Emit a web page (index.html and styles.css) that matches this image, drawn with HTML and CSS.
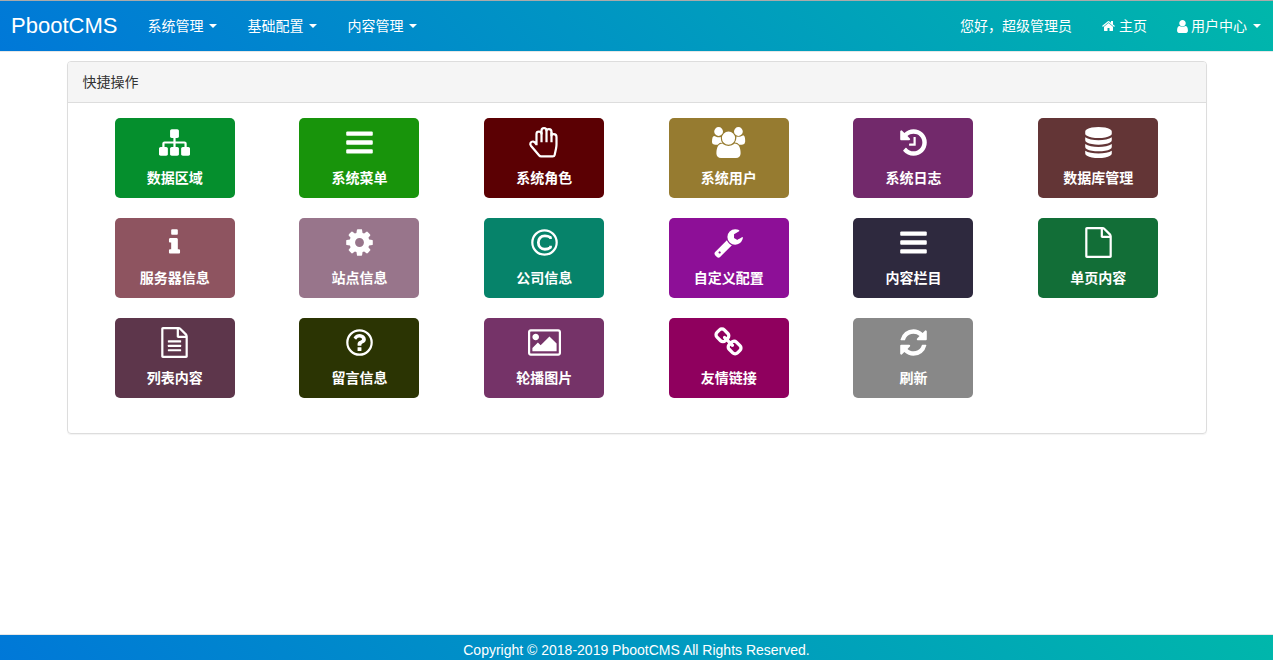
FILE: index.html
```html
<!DOCTYPE html>
<html lang="zh-CN">
<head>
<meta charset="utf-8">
<title>PbootCMS</title>
<link rel="stylesheet" href="styles.css">
</head>
<body>
<header class="navbar">
  <a class="brand" href="#">PbootCMS</a>
  <nav class="menu">
    <button class="nav-item" type="button">系统管理<span class="caret"></span></button>
    <button class="nav-item" type="button">基础配置<span class="caret"></span></button>
    <button class="nav-item" type="button">内容管理<span class="caret"></span></button>
  </nav>
  <div class="user-nav">
    <span class="nav-item">您好，超级管理员</span>
    <a class="nav-item" href="#"><svg class="home-icon" viewBox="90 0 1612 1792"><path d="M1472 992v480q0 26-19 45t-45 19h-384v-384h-256v384h-384q-26 0-45-19t-19-45v-480q0-1 .5-3t.5-3l575-474 575 474q1 2 1 6zm223-69l-62 74q-8 9-21 11h-3q-13 0-21-7l-692-577-692 577q-12 8-24 7-13-2-21-11l-62-74q-8-10-7-23.5t11-21.5l719-599q32-26 76-26t76 26l244 204v-195q0-14 9-23t23-9h192q14 0 23 9t9 23v408l219 182q10 8 11 21.5t-7 23.5z"/></svg>主页</a>
    <button class="nav-item" type="button"><svg class="user-icon" viewBox="256 128 1280 1536"><path d="M1536 1399q0 109-62.5 187t-150.5 78h-854q-88 0-150.5-78t-62.5-187q0-85 8.5-160.5t31.5-152 58.5-131 94-89 134.5-34.5q131 128 313 128t313-128q76 0 134.5 34.5t94 89 58.5 131 31.5 152 8.5 160.5zm-256-887q0 159-112.5 271.5t-271.5 112.5-271.5-112.5-112.5-271.5 112.5-271.5 271.5-112.5 271.5 112.5 112.5 271.5z"/></svg>用户中心<span class="caret"></span></button>
  </div>
</header>

<main class="container">
  <section class="panel">
    <h1 class="panel-heading">快捷操作</h1>
    <div class="tiles">
      <a class="tile area" href="#"><svg viewBox="0 0 1792 1792"><path d="M1792 1248v320q0 40-28 68t-68 28h-320q-40 0-68-28t-28-68v-320q0-40 28-68t68-28h96v-192h-512v192h96q40 0 68 28t28 68v320q0 40-28 68t-68 28h-320q-40 0-68-28t-28-68v-320q0-40 28-68t68-28h96v-192h-512v192h96q40 0 68 28t28 68v320q0 40-28 68t-68 28h-320q-40 0-68-28t-28-68v-320q0-40 28-68t68-28h96v-192q0-52 38-90t90-38h512v-192h-96q-40 0-68-28t-28-68v-320q0-40 28-68t68-28h320q40 0 68 28t28 68v320q0 40-28 68t-68 28h-96v192h512q52 0 90 38t38 90v192h96q40 0 68 28t28 68z"/></svg>数据区域</a>
      <a class="tile menus" href="#"><svg viewBox="0 0 1792 1792"><path d="M1664 1344v128q0 26-19 45t-45 19h-1408q-26 0-45-19t-19-45v-128q0-26 19-45t45-19h1408q26 0 45 19t19 45zm0-512v128q0 26-19 45t-45 19h-1408q-26 0-45-19t-19-45v-128q0-26 19-45t45-19h1408q26 0 45 19t19 45zm0-512v128q0 26-19 45t-45 19h-1408q-26 0-45-19t-19-45v-128q0-26 19-45t45-19h1408q26 0 45 19t19 45z"/></svg>系统菜单</a>
      <a class="tile roles" href="#"><svg viewBox="0 0 1792 1792"><g class="line"><path d="M433 1060V400q0-130 140-130 150 0 150 120V210q0-146 145-146 144 0 144 140 0-80 140-80 148 0 148 160v210q0-80 130-80 160 0 160 170v400q0 130-24 240l-84 390q-20 86-110 86H700q-70 0-110-50L110 1080q-60-80-24-160 50-90 160-80 60 6 100 60l87 120"/><path d="M723 300v580M1012 180v700M1300 300v580"/></g></svg>系统角色</a>
      <a class="tile users" href="#"><svg class="wide" viewBox="64 0 1920 1792"><path d="M657 896q-162 5-265 128h-134q-82 0-138-40.5t-56-118.5q0-353 124-353 6 0 43.5 21t97.5 42.5 119 21.5q67 0 133-23-5 37-5 66 0 159 93 287zm1071 637q0 120-73 189.5t-194 69.5h-874q-121 0-194-69.5t-73-189.5q0-53 3.5-103.5t14-109 26.5-108.5 43-97.5 62-81 85.5-53.5 111.5-20q10 0 43 21.5t73 48 107 48 135 21.5 135-21.5 107-48 73-48 43-21.5q61 0 111.5 20t85.5 53.5 62 81 43 97.5 26.5 108.5 14 109 3.5 103.5zm-1024-1277q0 106-75 181t-181 75-181-75-75-181 75-181 181-75 181 75 75 181zm704 384q0 159-112.5 271.5t-271.5 112.5-271.5-112.5-112.5-271.5 112.5-271.5 271.5-112.5 271.5 112.5 112.5 271.5zm576 225q0 78-56 118.5t-138 40.5h-134q-103-123-265-128 93-128 93-287 0-29-5-66 66 23 133 23 59 0 119-21.5t97.5-42.5 43.5-21q124 0 124 353zm-128-609q0 106-75 181t-181 75-181-75-75-181 75-181 181-75 181 75 75 181z"/></svg>系统用户</a>
      <a class="tile logs" href="#"><svg viewBox="0 0 1792 1792"><path d="M1664 896q0 156-61 298t-164 245-245 164-298 61q-172 0-327-72.5t-264-204.5q-7-10-6.5-22.5t8.5-20.5l137-138q10-9 25-9 16 2 23 12 73 95 179 147t225 52q104 0 198.5-40.5t163.5-109.5 109.5-163.5 40.5-198.5-40.5-198.5-109.5-163.5-163.5-109.5-198.5-40.5q-98 0-188 35.5t-160 101.5l137 138q31 30 14 69-17 40-59 40h-448q-26 0-45-19t-19-45v-448q0-42 40-59 39-17 69 14l130 129q107-101 244.5-156.5t284.5-55.5q156 0 298 61t245 164 164 245 61 298zm-640-288v448q0 14-9 23t-23 9h-320q-14 0-23-9t-9-23v-64q0-14 9-23t23-9h224v-352q0-14 9-23t23-9h64q14 0 23 9t9 23z"/></svg>系统日志</a>
      <a class="tile database" href="#"><svg viewBox="0 0 1792 1792"><path d="M896 768q237 0 443-43t325-127v170q0 69-103 128t-280 93.5-385 34.5-385-34.5-280-93.5-103-128v-170q119 84 325 127t443 43zm0 768q237 0 443-43t325-127v170q0 69-103 128t-280 93.5-385 34.5-385-34.5-280-93.5-103-128v-170q119 84 325 127t443 43zm0-384q237 0 443-43t325-127v170q0 69-103 128t-280 93.5-385 34.5-385-34.5-280-93.5-103-128v-170q119 84 325 127t443 43zm0-1152q208 0 385 34.5t280 93.5 103 128v128q0 69-103 128t-280 93.5-385 34.5-385-34.5-280-93.5-103-128v-128q0-69 103-128t280-93.5 385-34.5z"/></svg>数据库管理</a>
      <a class="tile server" href="#"><svg viewBox="0 0 1792 1792"><path d="M1216 1344v128q0 26-19 45t-45 19h-512q-26 0-45-19t-19-45v-128q0-26 19-45t45-19h64v-384h-64q-26 0-45-19t-19-45v-128q0-26 19-45t45-19h384q26 0 45 19t19 45v576h64q26 0 45 19t19 45zm-128-1152v192q0 26-19 45t-45 19h-256q-26 0-45-19t-19-45v-192q0-26 19-45t45-19h256q26 0 45 19t19 45z"/></svg>服务器信息</a>
      <a class="tile site" href="#"><svg viewBox="0 0 1792 1792"><path d="M1152 896q0-106-75-181t-181-75-181 75-75 181 75 181 181 75 181-75 75-181zm512-109v222q0 12-8 23t-20 13l-185 28q-19 54-39 91 35 50 107 138 10 12 10 25t-9 23q-27 37-99 108t-94 71q-12 0-26-9l-138-108q-44 23-91 38-16 136-29 186-7 28-36 28h-222q-14 0-24.5-8.5t-11.5-21.5l-28-184q-49-16-90-37l-141 107q-10 9-25 9-14 0-25-11-126-114-165-168-7-10-7-23 0-12 8-23 15-21 51-66.5t54-70.5q-27-50-41-99l-183-27q-13-2-21-12.5t-8-23.5v-222q0-12 8-23t19-13l186-28q14-46 39-92-40-57-107-138-10-12-10-24 0-10 9-23 26-36 98.5-107.5t94.5-71.5q13 0 26 10l138 107q44-23 91-38 16-136 29-186 7-28 36-28h222q14 0 24.5 8.5t11.5 21.5l28 184q49 16 90 37l142-107q9-9 24-9 13 0 25 10 129 119 165 170 7 8 7 22 0 12-8 23-15 21-51 66.5t-54 70.5q26 50 41 98l183 28q13 2 21 12.5t8 23.5z"/></svg>站点信息</a>
      <a class="tile company" href="#"><svg viewBox="0 0 1792 1792"><g class="line"><circle cx="896" cy="896" r="704"/><path class="thick" d="M1240 700V600Q1100 510 920 510 740 510 640 620 540 730 540 896q0 170 104 280t270 110q190 0 330-110v-90"/></g></svg>公司信息</a>
      <a class="tile custom" href="#"><svg viewBox="0 0 1792 1792"><path d="M448 1472q0-26-19-45t-45-19-45 19-19 45 19 45 45 19 45-19 19-45zm644-420l-682 682q-37 37-90 37-52 0-91-37l-106-108q-38-36-38-90 0-53 38-91l681-681q39 98 114.5 173.5t173.5 114.5zm634-435q0 39-23 106-47 134-164.5 217.5t-258.5 83.5q-185 0-316.5-131.5t-131.5-316.5 131.5-316.5 316.5-131.5q58 0 121.5 16.5t107.5 46.5q16 11 16 28t-16 28l-293 169v224l193 107q5-3 79-48.5t135.5-81 70.5-35.5q15 0 23.5 10t8.5 25z"/></svg>自定义配置</a>
      <a class="tile columns" href="#"><svg viewBox="0 0 1792 1792"><path d="M1664 1344v128q0 26-19 45t-45 19h-1408q-26 0-45-19t-19-45v-128q0-26 19-45t45-19h1408q26 0 45 19t19 45zm0-512v128q0 26-19 45t-45 19h-1408q-26 0-45-19t-19-45v-128q0-26 19-45t45-19h1408q26 0 45 19t19 45zm0-512v128q0 26-19 45t-45 19h-1408q-26 0-45-19t-19-45v-128q0-26 19-45t45-19h1408q26 0 45 19t19 45z"/></svg>内容栏目</a>
      <a class="tile single" href="#"><svg viewBox="0 0 1792 1792"><path d="M1596 380q28 28 48 76t20 88v1152q0 40-28 68t-68 28h-1344q-40 0-68-28t-28-68v-1600q0-40 28-68t68-28h896q40 0 88 20t76 48zm-444-244v376h376q-10-29-22-41l-313-313q-12-12-41-22zm384 1528v-1024h-416q-40 0-68-28t-28-68v-416h-768v1536h1280z"/></svg>单页内容</a>
      <a class="tile list" href="#"><svg viewBox="0 0 1792 1792"><path d="M1596 380q28 28 48 76t20 88v1152q0 40-28 68t-68 28h-1344q-40 0-68-28t-28-68v-1600q0-40 28-68t68-28h896q40 0 88 20t76 48zm-444-244v376h376q-10-29-22-41l-313-313q-12-12-41-22zm384 1528v-1024h-416q-40 0-68-28t-28-68v-416h-768v1536h1280z"/><rect x="512" y="768" width="768" height="128" rx="32"/><rect x="512" y="1024" width="768" height="128" rx="32"/><rect x="512" y="1280" width="768" height="128" rx="32"/></svg>列表内容</a>
      <a class="tile message" href="#"><svg viewBox="0 0 1792 1792"><circle class="line" cx="896" cy="896" r="704"/><path d="M1008 1200v160q0 14-9 23t-23 9h-160q-14 0-23-9t-9-23v-160q0-14 9-23t23-9h160q14 0 23 9t9 23zm256-496q0 50-15 90t-45.5 69-52 44-59.5 36q-32 18-46.5 28t-26 24-11.5 29v32q0 14-9 23t-23 9h-160q-14 0-23-9t-9-23v-68q0-35 10.5-64.5t24-47.5 39-35.5 41-25.5 44.5-21q53-25 75-43t22-49q0-42-43.5-71.5t-95.5-29.5q-56 0-95 27-29 20-80 83-9 12-25 12-11 0-19-6l-108-82q-10-7-12-20t5-23q122-192 349-192 129 0 238.5 89.5t109.5 214.5z"/></svg>留言信息</a>
      <a class="tile slides" href="#"><svg class="wide" viewBox="0 0 1920 1792"><path d="M640 576q0 80-56 136t-136 56-136-56-56-136 56-136 136-56 136 56 56 136zm1024 384v448h-1408v-192l320-320 160 160 512-512zm96-704h-1600q-13 0-22.5 9.5t-9.5 22.5v1216q0 13 9.5 22.5t22.5 9.5h1600q13 0 22.5-9.5t9.5-22.5v-1216q0-13-9.5-22.5t-22.5-9.5zm160 32v1216q0 66-47 113t-113 47h-1600q-66 0-113-47t-47-113v-1216q0-66 47-113t113-47h1600q66 0 113 47t47 113z"/></svg>轮播图片</a>
      <a class="tile links" href="#"><svg viewBox="0 0 1792 1792"><path d="M1520 1216q0-40-28-68l-208-208q-28-28-68-28-42 0-72 32 3 3 19 18.5t21.5 21.5 15 19 13 25.5 3.5 27.5q0 40-28 68t-68 28q-15 0-27.5-3.5t-25.5-13-19-15-21.5-21.5-18.5-19q-33 31-33 73 0 40 28 68l206 207q27 27 68 27 40 0 68-26l147-146q28-28 28-67zm-703-705q0-40-28-68l-206-207q-28-28-68-28-39 0-68 27l-147 146q-28 28-28 67 0 40 28 68l208 208q27 27 68 27 42 0 72-31-3-3-19-18.5t-21.5-21.5-15-19-13-25.5-3.5-27.5q0-40 28-68t68-28q15 0 27.5 3.5t25.5 13 19 15 21.5 21.5 18.5 19q33-31 33-73zm895 705q0 120-85 203l-147 146q-83 83-203 83-121 0-204-85l-206-207q-83-83-83-203 0-123 88-209l-88-88q-86 88-208 88-120 0-204-84l-208-208q-84-84-84-204t85-203l147-146q83-83 203-83 121 0 204 85l206 207q83 83 83 203 0 123-88 209l88 88q86-88 208-88 120 0 204 84l208 208q84 84 84 204z"/></svg>友情链接</a>
      <a class="tile refresh" href="#"><svg viewBox="0 0 1792 1792"><path d="M1639 1056q0 5-1 7-64 268-268 434.5t-478 166.5q-146 0-282.5-55t-243.5-157l-129 129q-19 19-45 19t-45-19-19-45v-448q0-26 19-45t45-19h448q26 0 45 19t19 45-19 45l-137 137q71 66 161 102t187 36q134 0 250-65t186-179q11-17 53-117 8-23 30-23h192q13 0 22.5 9.5t9.5 22.5zm25-800v448q0 26-19 45t-45 19h-448q-26 0-45-19t-19-45 19-45l138-138q-148-137-349-137-134 0-250 65t-186 179q-11 17-53 117-8 23-30 23h-199q-13 0-22.5-9.5t-9.5-22.5v-7q65-268 270-434.5t480-166.5q146 0 284 55.5t245 156.5l130-129q19-19 45-19t45 19 19 45z"/></svg>刷新</a>
    </div>
  </section>
</main>

<footer class="footer">Copyright © 2018-2019 PbootCMS All Rights Reserved.</footer>
</body>
</html>
```
FILE: styles.css
```css
* { box-sizing: border-box; }

body {
  margin: 0;
  min-height: 100vh;
  display: flex;
  flex-direction: column;
  background: #fff;
  color: #333;
  font: 14px/20px "Liberation Sans", "Noto Sans CJK SC", sans-serif;
}

a { color: inherit; text-decoration: none; }
svg { fill: currentColor; overflow: visible; }

.navbar,
.footer {
  color: #fff;
  background: linear-gradient(45deg, #0078d8, #00b7ab) padding-box;
}

.navbar {
  display: flex;
  align-items: center;
  height: 52px;
  padding: 0 12px 0 11px;
  border-top: 1px solid #aaa;
  border-bottom: 1px solid #e7e7e7;
}

.brand { font-size: 22px; margin-right: 30px; }

.menu,
.user-nav {
  display: flex;
  align-items: center;
  gap: 30px;
}

.user-nav { margin-left: auto; }

.nav-item {
  display: flex;
  align-items: center;
  padding: 0;
  border: 0;
  background: none;
  color: inherit;
  font: inherit;
  white-space: nowrap;
}

.caret {
  margin-left: 6px;
  border-top: 4px solid;
  border-left: 4px solid transparent;
  border-right: 4px solid transparent;
}

.home-icon { width: 13px; height: 14px; margin-right: 4px; }
.user-icon { width: 11px; height: 13px; margin-right: 3px; }

.container {
  flex: 1;
  width: 100%;
  max-width: 1140px;
  margin: 0 auto;
  padding: 9px 0 20px;
}

.panel {
  border: 1px solid #ddd;
  border-radius: 4px;
  box-shadow: 0 1px 1px rgba(0, 0, 0, 0.05);
}

.panel-heading {
  margin: 0;
  padding: 10px 15px;
  border-bottom: 1px solid #ddd;
  border-radius: 3px 3px 0 0;
  background: #f5f5f5;
  font-size: 14px;
  font-weight: 400;
}

.tiles {
  display: grid;
  grid-template-columns: repeat(6, 1fr);
  justify-items: center;
  row-gap: 20px;
  padding: 15px 15px 35px;
}

.tile {
  display: flex;
  flex-direction: column;
  align-items: center;
  gap: 10px;
  width: 120px;
  height: 80px;
  padding-top: 9px;
  border-radius: 5px;
  color: #fff;
  font-weight: 700;
}

.tile svg { width: 31px; height: 31px; }
.tile .wide { width: 33px; }

.line { fill: none; stroke: currentColor; stroke-width: 128; stroke-linejoin: round; }
.thick { stroke-width: 160; }

.area { background: #058f2d; }
.menus { background: #18940b; }
.roles { background: #5b0003; }
.users { background: #967b30; }
.logs { background: #72296b; }
.database { background: #633536; }
.server { background: #8e5460; }
.site { background: #98758b; }
.company { background: #06836a; }
.custom { background: #8d0f97; }
.columns { background: #2e293e; }
.single { background: #126e37; }
.list { background: #5d364b; }
.message { background: #2b3403; }
.slides { background: #753368; }
.links { background: #8f005e; }
.refresh { background: #888; }

.footer {
  padding: 5px 0 0;
  border-top: 1px solid #e7e7e7;
  text-align: center;
}
```
